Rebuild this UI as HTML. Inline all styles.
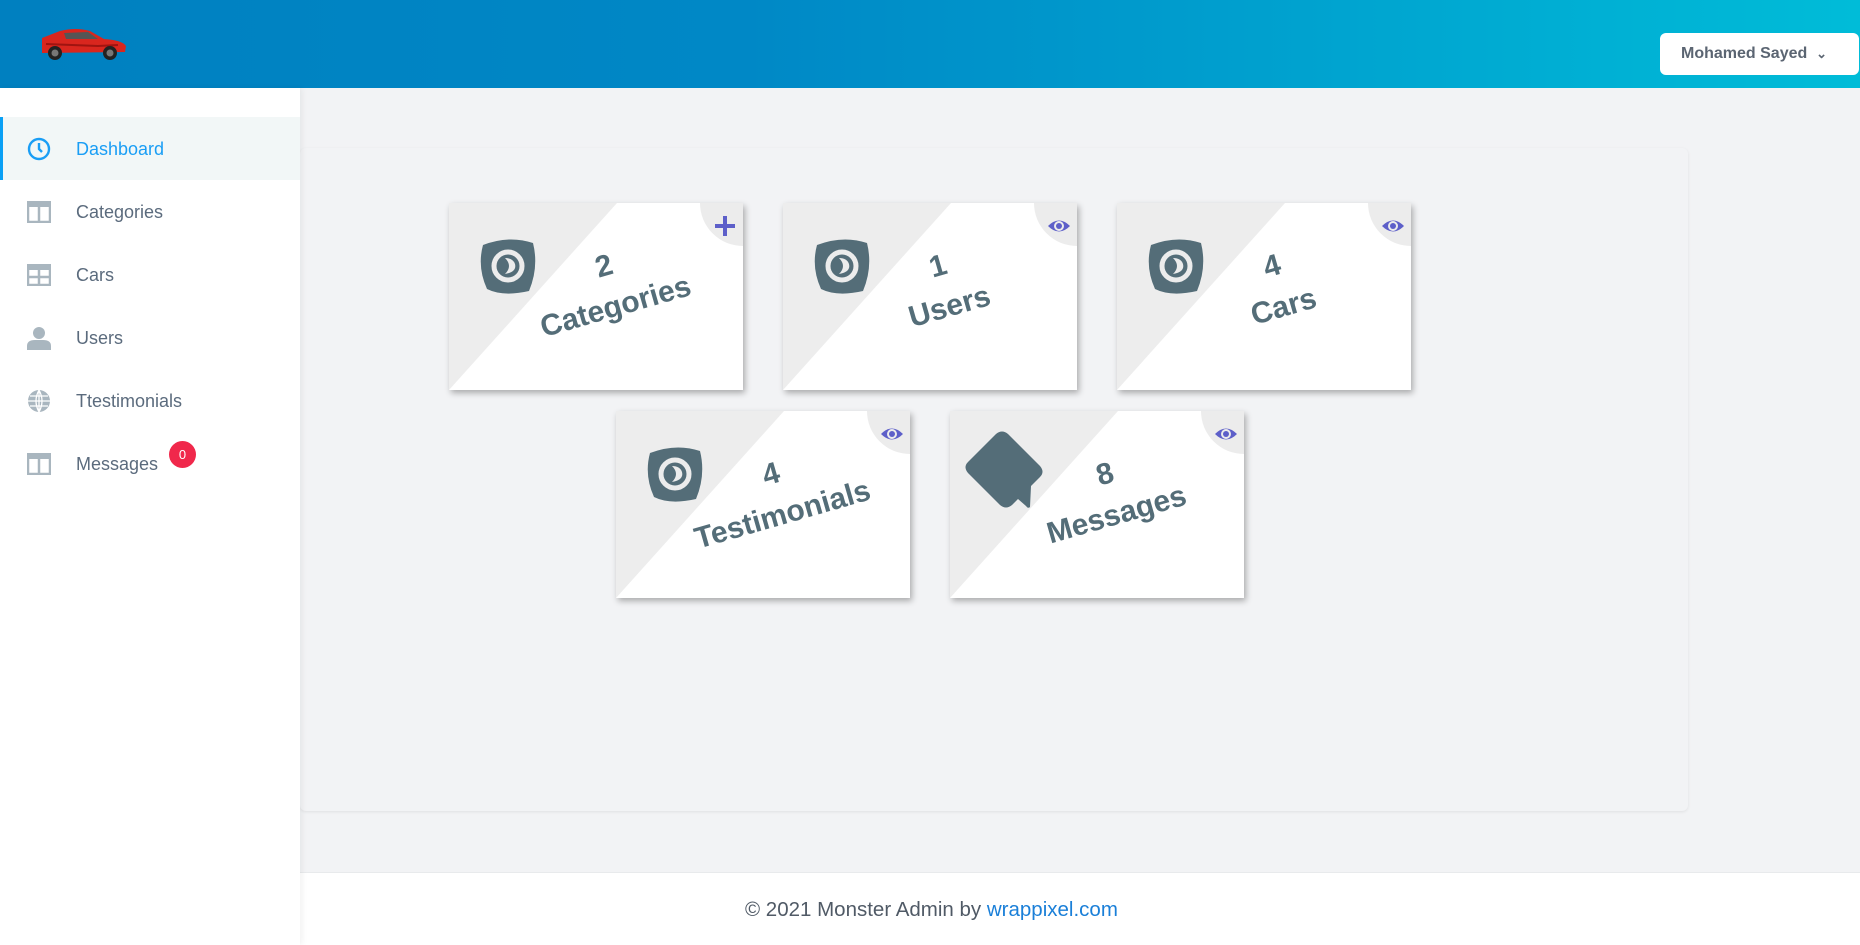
<!DOCTYPE html>
<html><head><meta charset="utf-8"><style>
*{margin:0;padding:0;box-sizing:border-box}
body{width:1860px;height:945px;overflow:hidden;background:#f2f3f5;font-family:"Liberation Sans",sans-serif;position:relative}
.hdr{position:absolute;left:0;top:0;width:1860px;height:88px;background:linear-gradient(90deg,#0080c0 0%,#0088c6 40%,#00bcd8 100%)}
.user{position:absolute;left:1660px;top:33px;width:199px;height:42px;background:#fff;border-radius:6px;color:#5b6572;font-size:16px;font-weight:bold;line-height:42px;padding-left:21px}
.side{position:absolute;left:0;top:88px;width:300px;height:857px;background:#fff;box-shadow:2px 0 6px rgba(0,0,0,.06);z-index:2}
.item{position:absolute;left:0;width:300px;height:63px;display:flex;align-items:center;font-size:18px;color:#5b6b7d}
.item svg{position:absolute;left:27px}
.item span{position:absolute;left:76px;top:22px}
.act{background:#f2f7f7;border-left:3px solid #0aa0f5;color:#1a9ef5}
.badge{position:absolute;left:169px;top:441px;width:27px;height:27px;border-radius:50%;background:#f0284b;color:#fff;font-size:13px;text-align:center;line-height:27px;z-index:3}
.main{position:absolute;left:300px;top:148px;width:1388px;height:663px;background:#f2f3f5;border-radius:6px;box-shadow:0 1px 3px rgba(0,0,0,.08)}
.foot{position:absolute;left:300px;top:872px;width:1560px;height:73px;background:#fff;border-top:1px solid #e8eaec}
.foot p{position:absolute;left:445px;top:25px;font-size:20.5px;color:#505a66}
.foot a{color:#1a7fd8;text-decoration:none}
.card{position:absolute;width:294px;height:187px;background:#fff;box-shadow:2px 3px 6px rgba(0,0,0,.3);overflow:hidden}
.card .g{position:absolute;left:0;top:0}
.corner{position:absolute right:-43px;position:absolute;right:-43px;top:-43px;width:86px;height:86px;border-radius:50%;background:#ececec}
.ci{position:absolute;right:6px;top:11px}
.big{position:absolute;left:30px;top:34px}
.txt{position:absolute;left:36px;top:42px;width:250px;text-align:center;color:#546d78;font-size:30px;font-weight:bold;line-height:42px;transform:rotate(-16deg)}
</style></head><body>
<div class="hdr">
<svg style="position:absolute;left:38px;top:26px" width="92" height="36" viewBox="0 0 92 36"><path d="M4 12 L22 5 Q38 1 52 5 L66 13 Q84 14 88 20 L87 26 L4 27 Z" fill="#d9261e"/><path d="M26 7 L50 6 L60 13 L28 13Z" fill="#555"/><path d="M8 18 L60 20 L80 19" stroke="#a01410" stroke-width="2" fill="none"/><circle cx="17" cy="27" r="7" fill="#222"/><circle cx="17" cy="27" r="3.5" fill="#777"/><circle cx="72" cy="27" r="7" fill="#222"/><circle cx="72" cy="27" r="3.5" fill="#777"/></svg>
<div class="user">Mohamed Sayed &nbsp;<span style="font-size:13px">&#8964;</span></div>
</div>
<div class="side">
<div class="item act" style="top:29px"><svg width="24" height="24" viewBox="0 0 24 24" style="left:24px"><circle cx="12" cy="12" r="10" fill="none" stroke="#1a9ef5" stroke-width="2.4"/><path d="M12 6v6l3 3" stroke="#1a9ef5" stroke-width="2.4" fill="none"/></svg><span style="left:73px">Dashboard</span></div>
<div class="item" style="top:92px"><svg width="24" height="22" viewBox="0 0 24 22"><rect x="1" y="1" width="22" height="20" fill="none" stroke="#a9b6bf" stroke-width="2.5"/><rect x="1" y="1" width="22" height="5" fill="#a9b6bf"/><path d="M12 5v16" stroke="#a9b6bf" stroke-width="2.5"/></svg><span>Categories</span></div>
<div class="item" style="top:155px"><svg width="24" height="22" viewBox="0 0 24 22"><rect x="1" y="1" width="22" height="20" fill="none" stroke="#a9b6bf" stroke-width="2.5"/><rect x="1" y="1" width="22" height="5" fill="#a9b6bf"/><path d="M12 5v16M1 13h22" stroke="#a9b6bf" stroke-width="2.5"/></svg><span>Cars</span></div>
<div class="item" style="top:218px"><svg width="24" height="24" viewBox="0 0 24 24"><circle cx="12" cy="7" r="6" fill="#a9b6bf"/><path d="M0 24v-4q0-6 8-6h8q8 0 8 6v4z" fill="#a9b6bf"/></svg><span>Users</span></div>
<div class="item" style="top:281px"><svg width="24" height="24" viewBox="0 0 24 24"><circle cx="12" cy="12" r="11" fill="#a9b6bf"/><path d="M1 12h22M3 7h18M3 17h18M12 1v22M12 1q-6 11 0 22M12 1q6 11 0 22" stroke="#fff" stroke-width="1.3" fill="none"/></svg><span>Ttestimonials</span></div>
<div class="item" style="top:344px"><svg width="24" height="22" viewBox="0 0 24 22"><rect x="1" y="1" width="22" height="20" fill="none" stroke="#a9b6bf" stroke-width="2.5"/><rect x="1" y="1" width="22" height="5" fill="#a9b6bf"/><path d="M12 5v16" stroke="#a9b6bf" stroke-width="2.5"/></svg><span>Messages</span></div>
</div>
<div class="badge">0</div>
<div class="main"></div>

<div class="card" style="left:449px;top:203px"><svg class="g" width="294" height="187"><polygon points="0,0 168,0 0,187" fill="#ededed"/></svg><div class="corner"></div><svg class="ci" width="24" height="24" viewBox="0 0 24 24"><path d="M12 2v20M2 12h20" stroke="#5d5fc9" stroke-width="4"/></svg>
<svg class="big" width="58" height="58" viewBox="0 0 58 58"><path d="M4 8 Q30 -2 54 6 Q60 30 50 54 Q24 60 8 52 Q-2 30 4 8Z" fill="#546d78"/><circle cx="29" cy="29" r="14" fill="none" stroke="#ececec" stroke-width="5"/><path d="M26 21 Q34 29 26 37 Q38 35 36 27 Q34 21 26 21Z" fill="#ececec"/></svg>
<div class="txt">2<br>Categories</div></div>

<div class="card" style="left:783px;top:203px"><svg class="g" width="294" height="187"><polygon points="0,0 168,0 0,187" fill="#ededed"/></svg><div class="corner"></div><svg class="ci" width="24" height="24" viewBox="0 0 24 24"><path d="M1 12Q12 1 23 12Q12 23 1 12Z" fill="#5d5fc9"/><circle cx="12" cy="12" r="5" fill="#ececec"/><circle cx="12" cy="12" r="3" fill="#5d5fc9"/></svg>
<svg class="big" width="58" height="58" viewBox="0 0 58 58"><path d="M4 8 Q30 -2 54 6 Q60 30 50 54 Q24 60 8 52 Q-2 30 4 8Z" fill="#546d78"/><circle cx="29" cy="29" r="14" fill="none" stroke="#ececec" stroke-width="5"/><path d="M26 21 Q34 29 26 37 Q38 35 36 27 Q34 21 26 21Z" fill="#ececec"/></svg>
<div class="txt">1<br>Users</div></div>

<div class="card" style="left:1117px;top:203px"><svg class="g" width="294" height="187"><polygon points="0,0 168,0 0,187" fill="#ededed"/></svg><div class="corner"></div><svg class="ci" width="24" height="24" viewBox="0 0 24 24"><path d="M1 12Q12 1 23 12Q12 23 1 12Z" fill="#5d5fc9"/><circle cx="12" cy="12" r="5" fill="#ececec"/><circle cx="12" cy="12" r="3" fill="#5d5fc9"/></svg>
<svg class="big" width="58" height="58" viewBox="0 0 58 58"><path d="M4 8 Q30 -2 54 6 Q60 30 50 54 Q24 60 8 52 Q-2 30 4 8Z" fill="#546d78"/><circle cx="29" cy="29" r="14" fill="none" stroke="#ececec" stroke-width="5"/><path d="M26 21 Q34 29 26 37 Q38 35 36 27 Q34 21 26 21Z" fill="#ececec"/></svg>
<div class="txt">4<br>Cars</div></div>

<div class="card" style="left:616px;top:411px"><svg class="g" width="294" height="187"><polygon points="0,0 168,0 0,187" fill="#ededed"/></svg><div class="corner"></div><svg class="ci" width="24" height="24" viewBox="0 0 24 24"><path d="M1 12Q12 1 23 12Q12 23 1 12Z" fill="#5d5fc9"/><circle cx="12" cy="12" r="5" fill="#ececec"/><circle cx="12" cy="12" r="3" fill="#5d5fc9"/></svg>
<svg class="big" width="58" height="58" viewBox="0 0 58 58"><path d="M4 8 Q30 -2 54 6 Q60 30 50 54 Q24 60 8 52 Q-2 30 4 8Z" fill="#546d78"/><circle cx="29" cy="29" r="14" fill="none" stroke="#ececec" stroke-width="5"/><path d="M26 21 Q34 29 26 37 Q38 35 36 27 Q34 21 26 21Z" fill="#ececec"/></svg>
<div class="txt">4<br>Testimonials</div></div>

<div class="card" style="left:950px;top:411px"><svg class="g" width="294" height="187"><polygon points="0,0 168,0 0,187" fill="#ededed"/></svg><div class="corner"></div><svg class="ci" width="24" height="24" viewBox="0 0 24 24"><path d="M1 12Q12 1 23 12Q12 23 1 12Z" fill="#5d5fc9"/><circle cx="12" cy="12" r="5" fill="#ececec"/><circle cx="12" cy="12" r="3" fill="#5d5fc9"/></svg>
<svg style="position:absolute;left:12px;top:18px" width="84" height="84" viewBox="0 0 84 84"><path d="M34 5 Q40 0 46 5 L78 37 Q83 43 78 48 L69 57 L68 78 Q66 80 64 77 L56 70 L50 76 Q44 81 38 76 L6 44 Q1 38 6 33 Z" fill="#546d78"/></svg>
<div class="txt">8<br>Messages</div></div>

<div class="foot"><p>© 2021 Monster Admin by <a>wrappixel.com</a></p></div>
</body></html>
